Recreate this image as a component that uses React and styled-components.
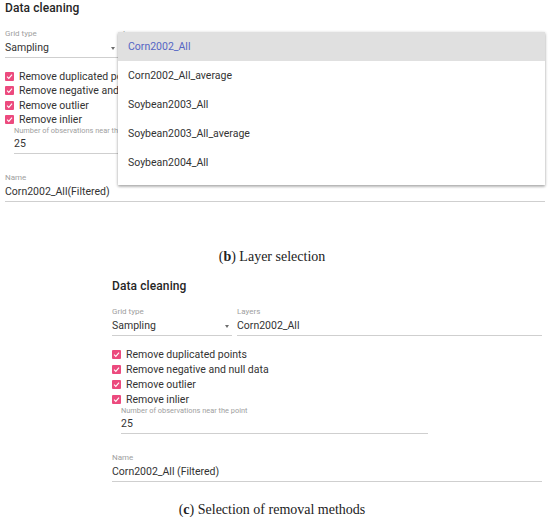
import styled, { createGlobalStyle } from "styled-components";

const GlobalStyle = createGlobalStyle`
  html, body {
    margin: 0;
    background: #fff;
  }
  body {
    font-family: Roboto, "Liberation Sans", sans-serif;
    color: #2b2b2b;
  }
`;

const Figure = styled.div`
  width: 550px;
  display: flex;
  flex-direction: column;
`;

const Panel = styled.div`
  margin-left: ${(p) => p.$left}px;
  width: ${(p) => p.$width}px;
  margin-top: ${(p) => p.$top || 0}px;
  display: flex;
  flex-direction: column;
`;

const Title = styled.div`
  font-size: 12px;
  font-weight: 500;
  line-height: 16px;
  color: #262626;
  letter-spacing: 0.1px;
`;

const FieldRow = styled.div`
  display: flex;
  gap: 5px;
  margin-top: 13px;
`;

const Field = styled.div`
  position: relative;
  width: ${(p) => (p.$width ? `${p.$width}px` : "auto")};
  flex: ${(p) => (p.$width ? "none" : "1")};
  margin-left: ${(p) => p.$indent || 0}px;
  margin-top: ${(p) => p.$top || 0}px;
  border-bottom: 1px solid #cfcfcf;
  padding-bottom: 2px;
`;

const Label = styled.div`
  font-size: ${(p) => p.$size || 8}px;
  line-height: ${(p) => p.$line || 10}px;
  color: #a0a0a0;
  white-space: nowrap;
`;

const Value = styled.div`
  font-size: 10.5px;
  line-height: 14px;
  margin-top: 2px;
  color: #333;
  white-space: nowrap;
`;

const Arrow = styled.span`
  position: absolute;
  right: 3px;
  top: 18px;
  border-left: 2.5px solid transparent;
  border-right: 2.5px solid transparent;
  border-top: 3px solid #6d6d6d;
`;

const Checks = styled.div`
  display: flex;
  flex-direction: column;
  gap: ${(p) => p.$gap}px;
  margin-top: 12px;
`;

const CheckRow = styled.label`
  display: flex;
  align-items: center;
  gap: 5px;
  font-size: 10.5px;
  line-height: 13px;
  color: #333;
  white-space: nowrap;
`;

const Box = styled.span`
  width: 9px;
  height: 9px;
  border-radius: 1px;
  background: #ec4a7e;
  display: flex;
  align-items: center;
  justify-content: center;
  flex: none;
`;

const Menu = styled.ul`
  position: absolute;
  left: -5px;
  right: 0;
  top: 3px;
  margin: 0;
  padding: 0 0 8px;
  list-style: none;
  background: #fff;
  box-shadow: 0 1px 3px rgba(0, 0, 0, 0.3), 0 2px 2px rgba(0, 0, 0, 0.12);
  z-index: 2;
`;

const MenuItem = styled.li`
  height: 29px;
  display: flex;
  align-items: center;
  padding-left: 10px;
  font-size: 10.5px;
  color: ${(p) => (p.$active ? "#5565c4" : "#333")};
  background: ${(p) => (p.$active ? "#e0e0e0" : "transparent")};
`;

const Caption = styled.div`
  font-family: "Liberation Serif", serif;
  font-size: 14px;
  line-height: 18px;
  text-align: center;
  color: #222;
  margin-top: ${(p) => p.$top}px;
  padding-right: 6px;

  b {
    font-weight: 700;
  }
`;

const layers = [
  "Corn2002_All",
  "Corn2002_All_average",
  "Soybean2003_All",
  "Soybean2003_All_average",
  "Soybean2004_All",
];

const methods = [
  "Remove duplicated points",
  "Remove negative and null data",
  "Remove outlier",
  "Remove inlier",
];

function Check() {
  return (
    <Box>
      <svg width="7" height="7" viewBox="0 0 10 10">
        <polyline
          points="1.5,5.2 4,7.6 8.6,2.4"
          fill="none"
          stroke="#fff"
          strokeWidth="1.6"
        />
      </svg>
    </Box>
  );
}

function DataCleaning({ left, width, top, selectWidth, countWidth, checkGap, name, open }) {
  return (
    <Panel $left={left} $width={width} $top={top}>
      <Title>Data cleaning</Title>
      <FieldRow>
        <Field $width={selectWidth}>
          <Label>Grid type</Label>
          <Value>Sampling</Value>
          <Arrow />
        </Field>
        <Field>
          <Label>Layers</Label>
          <Value>Corn2002_All</Value>
          {open && (
            <Menu>
              {layers.map((layer, i) => (
                <MenuItem key={layer} $active={i === 0}>
                  {layer}
                </MenuItem>
              ))}
            </Menu>
          )}
        </Field>
      </FieldRow>
      <Checks $gap={checkGap}>
        {methods.map((m) => (
          <CheckRow key={m}>
            <Check />
            {m}
          </CheckRow>
        ))}
      </Checks>
      <Field $width={countWidth} $indent={9}>
        <Label $size={7.4} $line={9}>
          Number of observations near the point
        </Label>
        <Value>25</Value>
      </Field>
      <Field $top={19}>
        <Label>Name</Label>
        <Value>{name}</Value>
      </Field>
    </Panel>
  );
}

export default function App() {
  return (
    <Figure>
      <GlobalStyle />
      <DataCleaning
        left={5}
        width={540}
        selectWidth={113}
        countWidth={300}
        checkGap={1.4}
        name="Corn2002_All(Filtered)"
        open
      />
      <Caption $top={46}>
        (<b>b</b>) Layer selection
      </Caption>
      <DataCleaning
        left={112}
        width={430}
        top={12}
        selectWidth={120}
        countWidth={307}
        checkGap={1.8}
        name="Corn2002_All (Filtered)"
      />
      <Caption $top={19}>
        (<b>c</b>) Selection of removal methods
      </Caption>
    </Figure>
  );
}
